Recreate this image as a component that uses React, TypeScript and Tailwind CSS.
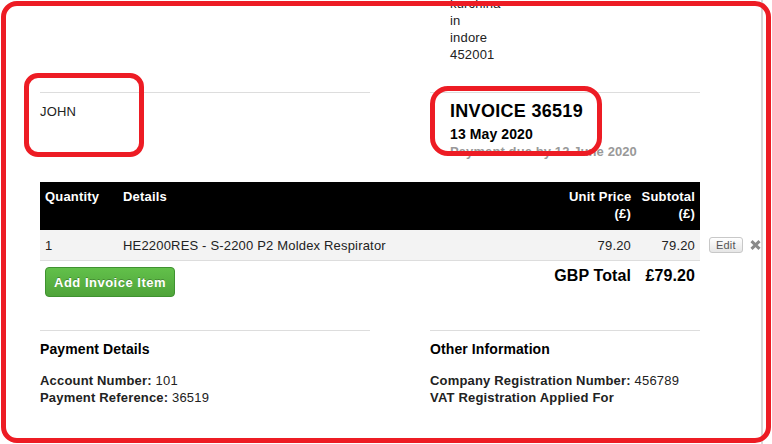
import React from "react";

export default function App() {
  return (
    <div className="relative w-[772px] h-[444px] overflow-hidden bg-white text-[13px] leading-[17px] tracking-[0.18px] text-[#222] font-['Liberation_Sans',Arial,sans-serif]">
      <div className="flex h-full">
        <div className="w-[763px] h-full border-r-2 border-[#d8d8d8] pl-[40px] shrink-0">
          <div className="w-[660px]">
            {/* address */}
            <div className="flex">
              <div className="w-[410px]" />
              <div className="-mt-[5px]">
                <div>kurchina</div>
                <div>in</div>
                <div>indore</div>
                <div>452001</div>
              </div>
            </div>

            {/* client + invoice */}
            <div className="flex mt-[29px]">
              <div className="w-[330px] border-t border-[#dddddd] pt-[10px]">JOHN</div>
              <div className="ml-[60px] w-[270px] border-t border-[#dddddd] pt-[7px] pl-[20px]">
                <div className="text-[18px] leading-[22px] font-bold tracking-[0.3px] text-black mb-[3px]">INVOICE 36519</div>
                <div className="text-[14px] leading-[18px] font-bold tracking-[0.1px] text-black">13 May 2020</div>
                <div className="font-bold tracking-[0.1px] text-[#999]">Payment due by 12 June 2020</div>
              </div>
            </div>

            {/* table */}
            <table className="mt-[22px] table-fixed border-collapse w-[723px]">
              <colgroup>
                <col className="w-[78px]" />
                <col className="w-[446px]" />
                <col className="w-[72px]" />
                <col className="w-[64px]" />
                <col className="w-[63px]" />
              </colgroup>
              <thead>
                <tr>
                  <th className="bg-black text-white font-bold text-left align-top px-[5px] pt-[6px] pb-[8px]">Quantity</th>
                  <th className="bg-black text-white font-bold text-left align-top px-[5px] pt-[6px] pb-[8px]">Details</th>
                  <th className="bg-black text-white font-bold text-right align-top px-[5px] pt-[6px] pb-[8px] whitespace-nowrap">
                    Unit Price
                    <br />
                    (£)
                  </th>
                  <th className="bg-black text-white font-bold text-right align-top px-[5px] pt-[6px] pb-[8px]">
                    Subtotal
                    <br />
                    (£)
                  </th>
                  <th />
                </tr>
              </thead>
              <tbody>
                <tr>
                  <td className="bg-[#f3f3f3] border-b border-[#dddddd] px-[5px] pt-[7px] pb-[6px]">1</td>
                  <td className="bg-[#f3f3f3] border-b border-[#dddddd] px-[5px] pt-[7px] pb-[6px] whitespace-nowrap">HE2200RES - S-2200 P2 Moldex Respirator</td>
                  <td className="bg-[#f3f3f3] border-b border-[#dddddd] px-[5px] pt-[7px] pb-[6px] text-right">79.20</td>
                  <td className="bg-[#f3f3f3] border-b border-[#dddddd] px-[5px] pt-[7px] pb-[6px] text-right">79.20</td>
                  <td className="pl-[9px] align-middle">
                    <div className="flex items-center gap-[7px]">
                      <button className="border border-[#c8c8c8] rounded-[3px] bg-linear-to-b from-white to-[#e6e6e6] text-[11px] leading-[14px] px-[6px] text-[#555]">
                        Edit
                      </button>
                      <svg width="11" height="10" viewBox="0 0 11 10">
                        <path d="M1.5 1.2 L9.5 8.8 M9.5 1.2 L1.5 8.8" stroke="#8a8a8a" strokeWidth="3" strokeLinecap="butt" />
                      </svg>
                    </div>
                  </td>
                </tr>
                <tr>
                  <td colSpan={2} className="pt-[6px] pl-[5px] align-top">
                    <button className="h-[30px] border border-[#3f9230] rounded-[4px] bg-linear-to-b from-[#62c04a] to-[#4fa43a] text-white font-bold px-[8px] leading-[17px] tracking-[0.5px] [text-shadow:0_-1px_0_rgba(0,0,0,0.25)]">
                      Add Invoice Item
                    </button>
                  </td>
                  <td colSpan={2} className="pt-[5px] align-top">
                    <div className="flex justify-end text-[16px] leading-[20px] font-bold tracking-[0.1px] text-black whitespace-nowrap">
                      <span className="pr-[5px]">GBP Total</span>
                      <span className="w-[64px] shrink-0 pr-[5px] text-right">£79.20</span>
                    </div>
                  </td>
                  <td />
                </tr>
              </tbody>
            </table>

            {/* bottom */}
            <div className="flex mt-[33px]">
              <div className="w-[330px] border-t border-[#dddddd] pt-[9px]">
                <div className="text-[14px] leading-[18px] font-bold tracking-[0.1px] text-black mb-[14px]">Payment Details</div>
                <div>
                  <b>Account Number:</b> 101
                </div>
                <div>
                  <b>Payment Reference:</b> 36519
                </div>
              </div>
              <div className="ml-[60px] w-[270px] border-t border-[#dddddd] pt-[9px]">
                <div className="text-[14px] leading-[18px] font-bold tracking-[0.1px] text-black mb-[14px]">Other Information</div>
                <div>
                  <b>Company Registration Number:</b> 456789
                </div>
                <div>
                  <b>VAT Registration Applied For</b>
                </div>
              </div>
            </div>
          </div>
        </div>
      </div>

      {/* annotations */}
      <div className="pointer-events-none absolute left-[1px] top-[1px] w-[770px] h-[442px] border-[5px] border-[#ed1c24] rounded-[16px]" />
      <div className="pointer-events-none absolute left-[24px] top-[73px] w-[120px] h-[84px] border-[5px] border-[#ed1c24] rounded-[14px]" />
      <div className="pointer-events-none absolute left-[430px] top-[86px] w-[172px] h-[70px] border-[5px] border-[#ed1c24] rounded-[18px]" />
    </div>
  );
}
